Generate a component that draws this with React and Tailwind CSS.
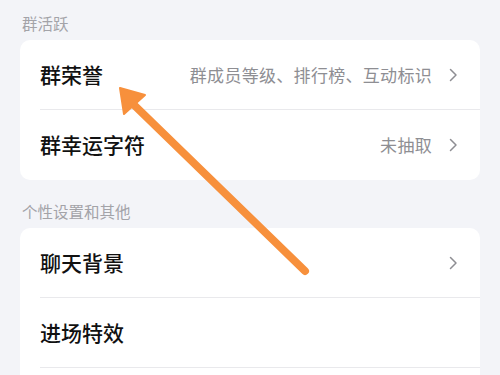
const FONT = { fontFamily: '"Noto Sans CJK SC", "Noto Sans", sans-serif' };

function Chevron() {
  return (
    <svg width="9" height="14" viewBox="0 0 9 14" className="shrink-0">
      <path d="M1.5 1.5 L7 7 L1.5 12.5" fill="none" stroke="#8e8e93" strokeWidth="1.5" strokeLinecap="round" strokeLinejoin="round" />
    </svg>
  );
}

function Row({ title, value, chevron = true, last = false }) {
  return (
    <div className="flex h-[70px] items-center pl-5">
      <div className={`flex h-full flex-1 items-center pr-[22px] ${last ? '' : 'border-b border-[#e9e9ec]'}`}>
        <span className="flex-1 text-[21px] font-medium text-[#111]">{title}</span>
        {value && <span className="mr-[17px] text-[17px] tracking-[0.3px] text-[#8e8e93]">{value}</span>}
        {chevron && <Chevron />}
      </div>
    </div>
  );
}

function Section({ label, children }) {
  return (
    <div>
      <div className="px-[22px] pb-[6px] text-[15.5px] leading-[22px] text-[#a3a3a8]">{label}</div>
      <div className="mx-5 overflow-hidden rounded-[10px] bg-white">{children}</div>
    </div>
  );
}

export default function App() {
  return (
    <div className="relative h-[375px] w-[500px] overflow-hidden bg-[#f3f4f8]" style={FONT}>
      <div className="flex flex-col gap-[20px] pt-[12px]">
        <Section label="群活跃">
          <Row title="群荣誉" value="群成员等级、排行榜、互动标识" />
          <Row title="群幸运字符" value="未抽取" last />
        </Section>
        <Section label="个性设置和其他">
          <Row title="聊天背景" />
          <Row title="进场特效" chevron={false} />
          <Row title="" chevron={false} />
        </Section>
      </div>
      {/* annotation arrow drawn over the list */}
      <svg className="pointer-events-none absolute inset-0" width="500" height="375" viewBox="0 0 500 375">
        <line x1="305" y1="271" x2="132" y2="103" stroke="#f7903c" strokeWidth="8" strokeLinecap="round" />
        <polygon points="120,88 145,95 124,114" fill="#f7903c" stroke="#f7903c" strokeWidth="2" strokeLinejoin="round" />
      </svg>
    </div>
  );
}
